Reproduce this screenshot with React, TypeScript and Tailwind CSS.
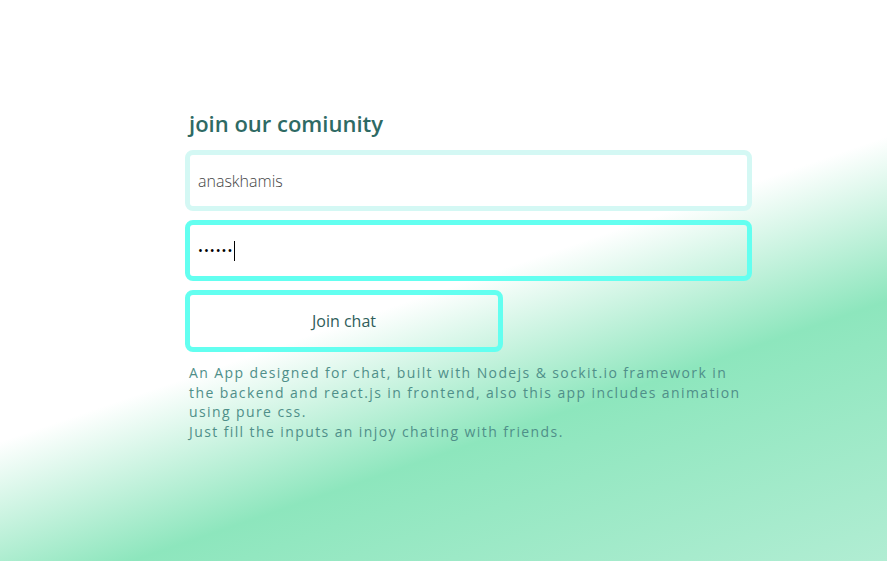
export default function App() {
  return (
    <div className="h-[561px] w-full bg-[linear-gradient(161deg,#ffffff_51%,#8de6bd_70%,#b1edd3_100%)] font-['Open_Sans',sans-serif]">
      <div className="ml-[185px] w-[567px] pt-[104px]">
        <h1 className="pl-[4px] text-[22px] font-semibold leading-[38px] text-[#2e6a64]">join our comiunity</h1>

        <div className="mt-[8px] flex flex-col gap-[9px]">
          <input
            className="h-[61px] w-full rounded-[8px] border-[5px] border-[#d4f8f4] bg-white px-[8px] text-[16px] font-light text-[#444] outline-none"
            defaultValue="anaskhamis"
          />
          <div className="flex h-[61px] w-full items-center rounded-[8px] border-[5px] border-[#63fff0] bg-transparent px-[8px]">
            <span className="text-[13px] tracking-[1px] text-black">••••••</span>
            <span className="ml-[1px] h-[20px] w-px bg-black" />
          </div>
          <button className="flex h-[62px] w-[318px] items-center justify-center rounded-[8px] border-[5px] border-[#63fff0] bg-transparent text-[16px] font-normal text-[#2f5d5a]">
            Join chat
          </button>
        </div>

        <p className="mt-[11px] pl-[4px] text-[14px] leading-[19.5px] tracking-[1.4px] text-[#4f8f89]">
          An App designed for chat, built with Nodejs &amp; sockit.io framework in the backend and react.js in frontend, also this app includes animation using pure css.
          <br />
          Just fill the inputs an injoy chating with friends.
        </p>
      </div>
    </div>
  );
}
